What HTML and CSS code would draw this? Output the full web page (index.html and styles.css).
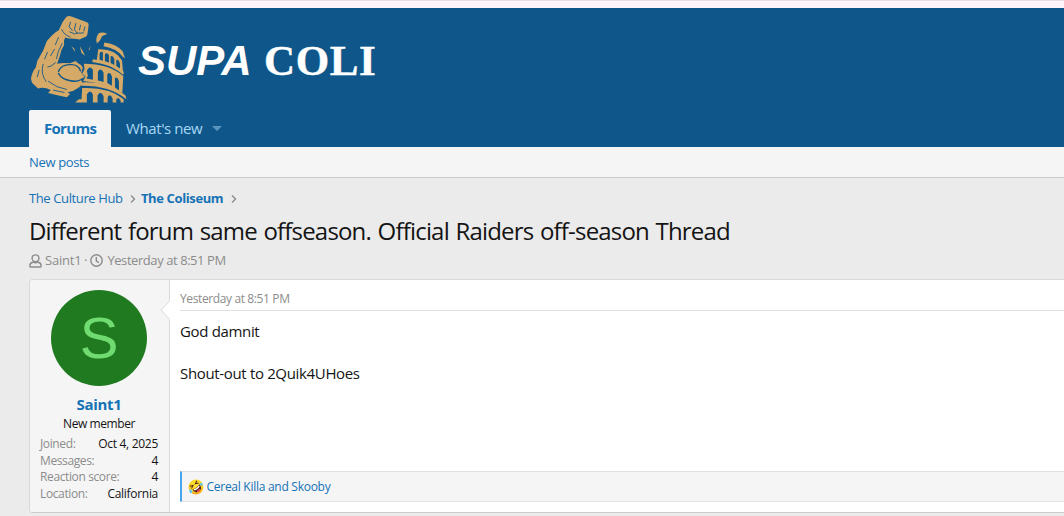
FILE: index.html
```html
<!DOCTYPE html>
<html lang="en">
<head>
<meta charset="utf-8">
<title>Different forum same offseason. Official Raiders off-season Thread</title>
<link rel="stylesheet" href="styles.css">
</head>
<body>
<div class="topline"></div>
<header class="header">
  <svg class="logo" viewBox="30 45 290 262" aria-hidden="true">
    <g class="gold">
      <path d="M139 50Q146 45 154 49L202 67Q207 70 205 78L203 92Q202 110 193 111L178 118Q160 114 146 115L135 112Q130 120 132 134Q122 148 119 168L111 190Q128 186 150 189L166 182L174 189Q184 193 188 202L183 217L194 230L181 236L187 247L178 260L160 271L142 276L150 281L140 290L115 285L84 278L92 269Q72 258 54 264L36 247L33 236Q36 213 47 202L52 181L69 151L80 123Q100 98 116 90L128 65Z"/>
      <path d="M230 108L236 98Q249 94 261 101L246 107L239 121L230 130L228 119ZM153 137L163 145L165 154ZM179 138L186 149L195 166L184 158ZM205 150L212 134L208 149Z"/>
      <path d="M252 127Q287 131 307 153L314 174L308 170Q289 144 250 138Z"/>
      <path fill-rule="evenodd" d="M234 147Q285 145 305 180L309 224Q278 195 229 184ZM238 178V160Q240 151 248 156V181ZM254 182V162Q260 154 266 165V187ZM271 188V168Q278 163 282 177V196ZM288 198V180Q294 174 299 190V209Z"/>
      <path d="M218 177Q280 185 310 213V221Q275 192 216 185Z"/>
      <path fill-rule="evenodd" d="M191 190Q266 190 309 227L306 278Q254 247 189 242L196 228L186 219L193 207ZM199 234L203 226L200 212Q207 193 218 208V238ZM233 240V214Q241 199 250 217V245ZM261 248V222Q269 211 275 228V256ZM284 261V233Q291 226 296 243V270Z"/>
      <path d="M187 246Q266 243 316 286L318 296Q266 254 181 256Z"/>
      <path fill-rule="evenodd" d="M186 263Q264 259 310 296V306H165L176 296H184ZM200 306V282Q210 264 218 282V306ZM232 306V285Q240 268 250 287V306ZM262 306V291Q269 277 277 294V306ZM288 306V297Q294 286 301 301V306Z"/>
    </g>
    <g class="cuts">
      <path d="M151 66L147 80L157 91M167 70L163 86M181 75L178 89M194 80L191 92M149 95L164 101L171 98M125 88Q131 104 150 110M163 88L171 99L190 98"/>
      <path d="M115 112L106 133M126 130L115 153L109 175M103 147L92 166M82 156L74 176M106 187L93 197L83 200M69 192Q61 222 78 243M57 210L52 229M85 243Q110 263 139 267M100 269L132 276"/>
      <path class="muscle" d="M115 213Q125 192 150 193Q174 191 181 211M115 219Q125 237 151 241Q170 245 182 238"/>
    </g>
  </svg>
  <div class="brand"><span class="supa">SUPA</span><span class="coli">COLI</span></div>
</header>
<nav class="nav">
  <a class="tab active"><span>Forums</span></a>
  <a class="tab"><span class="whats">What's new</span><i class="caret"></i></a>
</nav>
<div class="subnav"><span>New posts</span></div>
<main class="page">
  <div class="crumbs">
    <span>The Culture Hub</span>
    <svg class="chev" viewBox="0 0 6 10"><path d="M1 1.5L4.5 5L1 8.5"/></svg>
    <b>The Coliseum</b>
    <svg class="chev" viewBox="0 0 6 10"><path d="M1 1.5L4.5 5L1 8.5"/></svg>
  </div>
  <h1><span>Different forum same offseason. Official Raiders off-season Thread</span></h1>
  <div class="meta">
    <svg class="user" viewBox="0 0 13 14"><circle cx="6.5" cy="4.3" r="3.4"/><path d="M3.8 8.2Q.9 8.8.9 11.5V12.2Q.9 13 1.8 13H11.2Q12.1 13 12.1 12.2V11.5Q12.1 8.8 9.2 8.2Q6.5 9.5 3.8 8.2Z"/></svg>
    <span class="starter">Saint1</span><span class="dot">·</span>
    <svg class="clock" viewBox="0 0 13 13"><circle cx="6.5" cy="6.5" r="5.7"/><path d="M6.3 3V6.8L8.8 8.6"/></svg>
    <span class="when">Yesterday at 8:51 PM</span>
  </div>
  <article class="post">
    <aside class="member">
      <svg class="notch" viewBox="0 0 10 20"><path class="notch-fill" d="M10 0L1 10L10 20Z"/><path class="notch-line" d="M9.5 1L1 10L9.5 19"/></svg>
      <div class="avatar">S</div>
      <div class="name"><span>Saint1</span></div>
      <div class="rank"><span>New member</span></div>
      <dl>
        <div><dt>Joined:</dt><dd>Oct 4, 2025</dd></div>
        <div><dt>Messages:</dt><dd>4</dd></div>
        <div><dt>Reaction score:</dt><dd>4</dd></div>
        <div><dt>Location:</dt><dd>California</dd></div>
      </dl>
    </aside>
    <section class="content">
      <div class="date"><span>Yesterday at 8:51 PM</span></div>
      <div class="body"><p><span>God damnit</span></p><p><span>Shout-out to 2Quik4UHoes</span></p></div>
      <div class="reactions">
        <svg class="emoji" viewBox="0 0 32 32"><defs><radialGradient id="face" cx=".5" cy=".35" r=".65"><stop offset="0" stop-color="#ffe53b"/><stop offset=".7" stop-color="#ffd21e"/><stop offset="1" stop-color="#f4a01c"/></radialGradient></defs><circle cx="16" cy="16" r="14.8" fill="url(#face)"/><g transform="rotate(-38 16 16)"><path d="M7 16Q16 19 25 16Q25 27 16 27Q7 27 7 16Z" fill="#54251b"/><path d="M9 17Q16 20 23 17L22 20Q16 22 10 20Z" fill="#fff"/><path d="M11 25Q16 20 21 25Q16 29 11 25Z" fill="#e64b54"/><path d="M7 7L13 10L7 13M25 7L19 10L25 13" fill="none" stroke="#54251b" stroke-width="2"/></g><path d="M3 21Q9 20 9 25Q7 30 3 27ZM23 9Q28 7 30 10Q30 14 26 14Z" fill="#60c9ee"/></svg>
        <span>Cereal Killa and Skooby</span>
      </div>
    </section>
  </article>
</main>
</body>
</html>
```
FILE: styles.css
```css
* { box-sizing: border-box; }
body { margin: 0; height: 516px; overflow: hidden; background: #ebebeb; color: #141414; font: 15px/21px "Open Sans", "Noto Sans", sans-serif; }
svg { display: block; flex: none; }
span, dt, dd, b { white-space: nowrap; }
.topline { height: 8px; background: #fff5fb; border-top: 1px solid #eadde7; }
.header { height: 102px; background: #0f578a; display: flex; padding: 7px 0 0 30px; }
.logo { width: 97px; height: 88px; }
.gold { fill: #d5a968; }
.cuts { fill: none; stroke: #0f578a; stroke-width: 2.6; stroke-linecap: round; stroke-linejoin: round; }
.muscle { stroke-width: 4; }
.brand { display: flex; align-items: baseline; margin: 19px 0 0 11px; height: 54px; line-height: 54px; color: #fff; font-weight: 700; }
.supa { font: italic 700 42px/54px "Liberation Sans", sans-serif; width: 126px; }
.coli { font: 700 43px/54px "Liberation Serif", serif; letter-spacing: .6px; -webkit-text-stroke: .4px #fff; }
.nav { height: 37px; background: #0f578a; padding-left: 29px; display: flex; }
.tab { height: 37px; padding: 0 15px; line-height: 37px; color: #a8d7f5; display: flex; align-items: center; }
.active { width: 82px; background: #f5f5f5; color: #1572b5; border-radius: 2px 2px 0 0; font-weight: 700; letter-spacing: -.7px; }
.whats { letter-spacing: -.4px; }
.caret { margin-left: 10px; border: 5px solid transparent; border-top-color: #5997c2; border-bottom: 0; }
.subnav { height: 31px; padding-left: 29px; background: #f5f5f5; border-bottom: 1px solid #cbcbcb; color: #1572b5; font-size: 13px; line-height: 30px; letter-spacing: -.35px; }
.page { padding: 10px 0 0 29px; }
.crumbs { display: flex; align-items: center; height: 20px; line-height: 20px; font-size: 13px; color: #1572b5; letter-spacing: -.38px; }
.crumbs b { letter-spacing: -.38px; }
.chev { width: 6px; height: 10px; margin: 2px 5px 0 7.3px; fill: none; stroke: #8c8c8c; stroke-width: 1.4; }
h1 { margin: 7px 0 0; height: 31px; font-size: 24px; line-height: 31px; font-weight: 400; letter-spacing: -.82px; word-spacing: 1.2px; }
.meta { margin-top: 4px; height: 21px; display: flex; align-items: center; font-size: 13px; color: #8c8c8c; }
.meta svg { fill: none; stroke: #8c8c8c; stroke-width: 1.4; }
.user { width: 13px; height: 14px; }
.clock { width: 13px; height: 13px; }
.starter { margin-left: 3px; letter-spacing: -.2px; }
.dot { margin: 0 3px 0 2.5px; }
.when { margin-left: 4px; letter-spacing: -.43px; }
.post { margin-top: 8px; height: 234px; display: flex; background: #fff; border: 1px solid #d8d8d8; border-right: 0; border-bottom-color: #cbcbcb; border-radius: 4px 0 0 4px; }
.member { position: relative; width: 140px; height: 232px; flex: none; padding: 10px 11px 10px 10px; background: #f5f5f5; border-right: 1px solid #d8d8d8; border-radius: 3px 0 0 3px; }
.notch { position: absolute; right: -1px; top: 20px; width: 10px; height: 20px; }
.notch-fill { fill: #fff; }
.notch-line { fill: none; stroke: #d8d8d8; }
.avatar { width: 96px; height: 96px; margin: 0 0 0 11px; border-radius: 50%; background: #207a20; color: #70db70; text-align: center; font: 58px/96px "Liberation Sans", sans-serif; }
.name { margin-top: 8px; text-align: center; color: #1572b5; font-weight: 700; letter-spacing: -.3px; }
.rank { text-align: center; font-size: 12px; line-height: 17px; letter-spacing: -.42px; }
dl { margin: 3px 0 0; font-size: 12px; }
dl div { display: flex; justify-content: space-between; height: 16.7px; line-height: 17px; }
dt { color: #8c8c8c; letter-spacing: -.38px; }
dd { margin: 0; letter-spacing: -.3px; }
.content { flex: 1; padding: 10px 0 0 10px; }
.date { height: 21px; line-height: 18px; border-bottom: 1px solid #e0e0e0; color: #8c8c8c; font-size: 12px; letter-spacing: -.38px; }
.body { height: 160px; padding-top: 10px; }
.body p { margin: 0 0 21px; letter-spacing: -.34px; }
.reactions { height: 31px; display: flex; align-items: center; padding-left: 6px; background: #f5f5f5; border: 1px solid #e0e0e0; border-left: 2px solid #47a7eb; border-right: 0; color: #1572b5; font-size: 12px; letter-spacing: -.27px; }
.emoji { width: 16px; height: 16px; margin-right: 2.5px; }
```
